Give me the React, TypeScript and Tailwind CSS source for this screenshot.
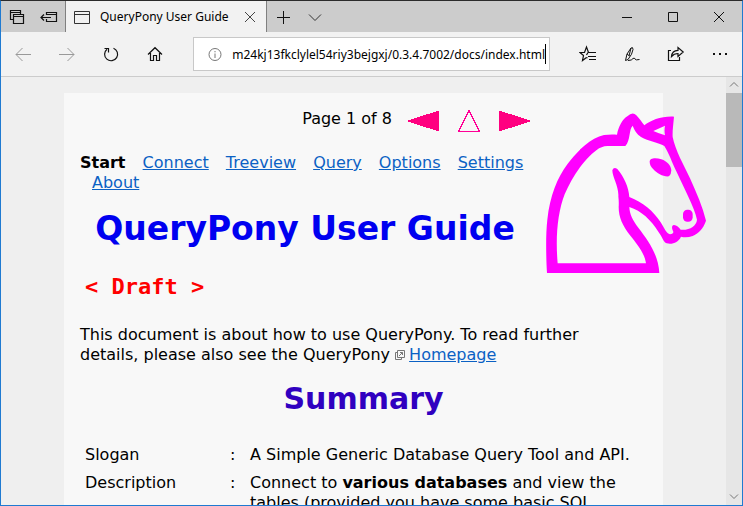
import type { ReactNode } from "react";

type IconProps = { children: ReactNode; stroke?: string };

function Icon({ children, stroke = "#111" }: IconProps) {
  return (
    <svg width="18" height="18" viewBox="0 0 18 18" fill="none" stroke={stroke} strokeWidth="1" aria-hidden="true">
      {children}
    </svg>
  );
}

function ToolButton({ label, children }: { label: string; children: ReactNode }) {
  return (
    <button type="button" aria-label={label} className="flex w-11 shrink-0 items-center justify-center">
      {children}
    </button>
  );
}

function WindowButton({ label, children }: { label: string; children: ReactNode }) {
  return (
    <button type="button" aria-label={label} className="flex w-[46px] items-center justify-center">
      {children}
    </button>
  );
}

function TitleBar() {
  return (
    <header className="flex h-[31px] shrink-0 bg-[#cccccc]">
      <button type="button" aria-label="Tabs you've set aside" className="flex w-8 items-center justify-center">
        <Icon>
          <path d="M5 11.500H2.500V2.500H12.500V6M2.500 4.500H12.500M5.500 6.500H15.500V15.500H5.500ZM5.500 8.500H15.500" strokeWidth="1.200" />
        </Icon>
      </button>
      <button type="button" aria-label="Set these tabs aside" className="flex w-8 items-center justify-center">
        <Icon>
          <path d="M6.500 7V4.500H16.500V13.500H6.500V11M6.500 6.500H16.500M1 9.500H11M4 6.500L1 9.500L4 12.500" strokeWidth="1.200" />
        </Icon>
      </button>
      <div className="flex w-[202px] items-center border-x border-[#808080] bg-[#f2f2f2] pl-2">
        <Icon stroke="#333">
          <path d="M0.500 3.500H15.500V15.500H0.500ZM0.500 6.500H15.500" />
        </Icon>
        <span className="ml-2 flex-1 whitespace-nowrap font-['Noto_Sans',sans-serif] text-[12px] leading-4 text-black">
          QueryPony User Guide
        </span>
        <button type="button" aria-label="Close tab" className="flex w-8 items-center justify-center">
          <Icon stroke="#444">
            <path d="M4 4L14 14M14 4L4 14" />
          </Icon>
        </button>
      </div>
      <button type="button" aria-label="New tab" className="flex w-8 items-center justify-center">
        <Icon>
          <path d="M9.500 3V16M3 9.500H16" />
        </Icon>
      </button>
      <button type="button" aria-label="Show tab previews" className="flex w-8 items-center justify-center">
        <Icon stroke="#333">
          <path d="M3 6.500L9 12.500L15 6.500" />
        </Icon>
      </button>
      <div className="ml-auto flex">
        <WindowButton label="Minimize">
          <Icon>
            <path d="M4 9.500H14" />
          </Icon>
        </WindowButton>
        <WindowButton label="Maximize">
          <Icon>
            <path d="M4.500 4.500H13.500V13.500H4.500Z" />
          </Icon>
        </WindowButton>
        <WindowButton label="Close">
          <Icon>
            <path d="M4 4L14 14M14 4L4 14" />
          </Icon>
        </WindowButton>
      </div>
    </header>
  );
}

function Toolbar() {
  return (
    <div className="flex h-[45px] shrink-0 border-b border-[#cccccc] bg-[#f2f2f2]">
      <ToolButton label="Back">
        <Icon stroke="#999">
          <path d="M17 9.500H2M8.500 3L2 9.500L8.500 16" />
        </Icon>
      </ToolButton>
      <ToolButton label="Forward">
        <Icon stroke="#999">
          <path d="M1 9.500H16M9.500 3L16 9.500L9.500 16" />
        </Icon>
      </ToolButton>
      <ToolButton label="Refresh">
        <Icon>
          <path d="M11.500 3.200A6.500 6.500 0 1 1 5 4.200M2.500 3.500H6.500V7.500" strokeWidth="1.200" />
        </Icon>
      </ToolButton>
      <ToolButton label="Home">
        <Icon>
          <path d="M2 9.500L9 2.700L16 9.500M4.500 8V15.500H7.500V10.500H10.500V15.500H13.500V8" strokeWidth="1.200" />
        </Icon>
      </ToolButton>
      <label className="mx-4 my-[5px] flex min-w-0 flex-1 items-center border border-[#c8c8c8] bg-white pl-3">
        <Icon stroke="#777">
          <circle cx="9" cy="9.500" r="6" />
          <path d="M9 8.500V13M9 6V7.300" />
        </Icon>
        <span className="sr-only">Address</span>
        <input
          type="text"
          defaultValue="m24kj13fkclylel54riy3bejgxj/0.3.4.7002/docs/index.html"
          className="ml-1 h-5 min-w-0 flex-1 border-r border-black bg-transparent text-right font-['Noto_Sans',sans-serif] text-[12px] leading-4 text-black outline-none"
        />
        <span className="w-[3px]" />
      </label>
      <ToolButton label="Favorites">
        <Icon>
          <path d="M10 7.500H9.500L7.500 2L5.500 7.500H1L4.500 10.500L3.500 15.500L7.500 12.500M7.500 12.500L8.500 13M9 7.500H17M9 11.500H17M10 14.500H17M9 7.500L7.500 10" strokeWidth="1.200" />
        </Icon>
      </ToolButton>
      <ToolButton label="Add notes">
        <Icon>
          <path d="M2.500 15.500L4 9L8 3Q10 1.500 10 4.500Q9.500 9 5 14.500L2.500 15.500ZM4 9L6.500 11M8 3L6 11M5 15.500Q9 15.500 10 13.500Q11.500 12.500 12 14Q12.500 15.500 16.500 14.500" />
        </Icon>
      </ToolButton>
      <ToolButton label="Share">
        <Icon>
          <path d="M4 5.500H1.500V15.500H12.500V12M4.500 11.500Q5 5.500 11 5.300V2.500L16.200 7L11 11.500V8.500Q7 8.500 4.500 11.500Z" strokeWidth="1.200" />
        </Icon>
      </ToolButton>
      <ToolButton label="More">
        <Icon>
          <path d="M2 9H4M8 9H10M14 9H16" strokeWidth="2" />
        </Icon>
      </ToolButton>
    </div>
  );
}

function Scrollbar() {
  return (
    <div className="flex w-4 shrink-0 flex-col bg-[#e6e6e6]" aria-hidden="true">
      <svg width="16" height="16" viewBox="0 0 16 16" fill="none" stroke="#777">
        <path d="M4 9.500L8 5.500L12 9.500" />
      </svg>
      <div className="h-[74px] bg-[#b9b9b9]" />
      <svg className="mt-auto" width="16" height="16" viewBox="0 0 16 16" fill="none" stroke="#777">
        <path d="M4 5.500L8 9.500L12 5.500" />
      </svg>
    </div>
  );
}

function PonyLogo() {
  return (
    <svg
      className="float-right -mr-[59px] ml-4 mt-1 block h-40 w-40"
      viewBox="48 68 480 480"
      fill="#ff00ff"
      fillRule="evenodd"
      role="img"
      aria-label="QueryPony"
    >
      <path d="M51 548C48 500 47 430 52 388C60 316 82 262 112 222C143 180 183 142 222 134C236 132 250 132 261 133C265 110 277 87 292 78Q308 62 319 75C328 84 336 97 343 105C362 90 395 77 432 79C430 102 427 122 428 140C436 180 460 222 480 264C500 308 518 350 528 391C520 415 505 430 488 437Q470 443 453 439C445 456 428 463 410 459C400 454 397 440 385 424C362 388 335 362 298 350C299 372 308 390 325 412C355 452 385 492 388 548ZM83 519H348C344 490 325 467 300 435C278 405 266 382 266 350Q267 335 265 318C267 290 247 260 247 240Q251 229 262 236C282 260 296 290 298 320C340 337 370 362 392 396C402 412 410 431 420 432Q431 430 430 424C425 415 424 405 432 404C440 405 447 411 452 418C480 420 499 407 501 388C494 352 460 290 440 245C425 215 418 190 403 167C385 157 355 153 333 140C320 131 313 120 308 106C296 118 302 150 286 167H232Q214 168 200 179C160 208 125 262 104 312C83 366 76 440 83 519ZM370 122L405 106Q402 120 405 135Q388 130 370 122Z" />
      <path d="M359 214C359 202 378 201 394 207C412 213 423 226 424 240Q424 251 417 258C400 260 382 250 370 237Q359 226 359 214Z" />
      <rect x="459" y="358" width="29" height="36" rx="13" />
    </svg>
  );
}

const chapters = ["Connect", "Treeview", "Query", "Options", "Settings", "About"];

function GuidePage() {
  return (
    <main className="mx-[63px] mt-4 bg-[#f8f8f8] px-4 pt-4 font-['DejaVu_Sans',sans-serif] text-[16px] leading-5 text-black">
      <PonyLogo />
      <div className="flex items-start justify-end">
        <span className="mr-4">Page 1 of 8</span>
        <a href="#previous" aria-label="Previous page" className="mr-4">
          <svg width="32" height="24" viewBox="0 0 32 24" fill="#ff0080" shapeRendering="crispEdges">
            <path d="M1 11H0V13H1L31 22.500V1.500Z" />
          </svg>
        </a>
        <a href="#contents" aria-label="Contents" className="mr-4">
          <svg width="26" height="24" viewBox="0 0 26 24" fill="none" stroke="#ff0096" shapeRendering="crispEdges">
            <path d="M13 1.500L23.500 22.500H2.500Z" />
          </svg>
        </a>
        <a href="#next" aria-label="Next page">
          <svg width="32" height="24" viewBox="0 0 32 24" fill="#ff0080" shapeRendering="crispEdges">
            <path d="M31 11H32V13H31L1 22.500V1.500Z" />
          </svg>
        </a>
      </div>
      <nav className="mt-5">
        <b>Start</b>{" "}
        {chapters.map((chapter) => (
          <span key={chapter}>
            <a href={"#" + chapter.toLowerCase()} className="ml-3 text-[#0b61c4] underline">
              {chapter}
            </a>{" "}
          </span>
        ))}
      </nav>
      <h1 className="mt-4 text-center text-[33px] font-bold leading-10 text-[#0000f0]">QueryPony User Guide</h1>
      <p className="mt-6 pl-[5px] font-['DejaVu_Sans_Mono',monospace] text-[22px] font-bold leading-7 text-[#ff0000]">
        &lt; Draft &gt;
      </p>
      <p className="mt-6 pr-4">
        This document is about how to use QueryPony. To read further details, please also see the QueryPony{" "}
        <svg className="mr-1 inline-block align-baseline" width="10" height="10" viewBox="0 0 10 10" fill="none" stroke="#777" aria-hidden="true">
          <path d="M2.500 2.500H0.500V9.500H6.500V7.500M2.500 0.500H9.500V7.500H2.500ZM4 6L7.500 2.500M5 2.500H7.500V5" />
        </svg>
        <a href="#homepage" className="text-[#0b61c4] underline">
          Homepage
        </a>
      </p>
      <h2 className="mt-4 text-center text-[30px] font-bold leading-9 text-[#3000c0]">Summary</h2>
      <table className="mt-6 w-full">
        <tbody className="align-top">
          <tr>
            <th scope="row" className="w-[145px] px-[5px] py-1 text-left font-normal">Slogan</th>
            <td className="w-5 px-[5px] py-1">:</td>
            <td className="py-1 pl-[5px]">A Simple Generic Database Query Tool and API.</td>
          </tr>
          <tr>
            <th scope="row" className="px-[5px] py-1 text-left font-normal">Description</th>
            <td className="px-[5px] py-1">:</td>
            <td className="py-1 pl-[5px]">
              Connect to <b>various databases</b> and view the tables (provided you have some basic SQL
            </td>
          </tr>
        </tbody>
      </table>
    </main>
  );
}

export default function App() {
  return (
    <div className="flex h-screen flex-col border border-[#1f7ad1] border-t-[#2b2b2b] bg-[#efefef]">
      <TitleBar />
      <Toolbar />
      <div className="flex min-h-0 flex-1">
        <div className="min-w-0 flex-1 overflow-hidden">
          <GuidePage />
        </div>
        <Scrollbar />
      </div>
    </div>
  );
}
